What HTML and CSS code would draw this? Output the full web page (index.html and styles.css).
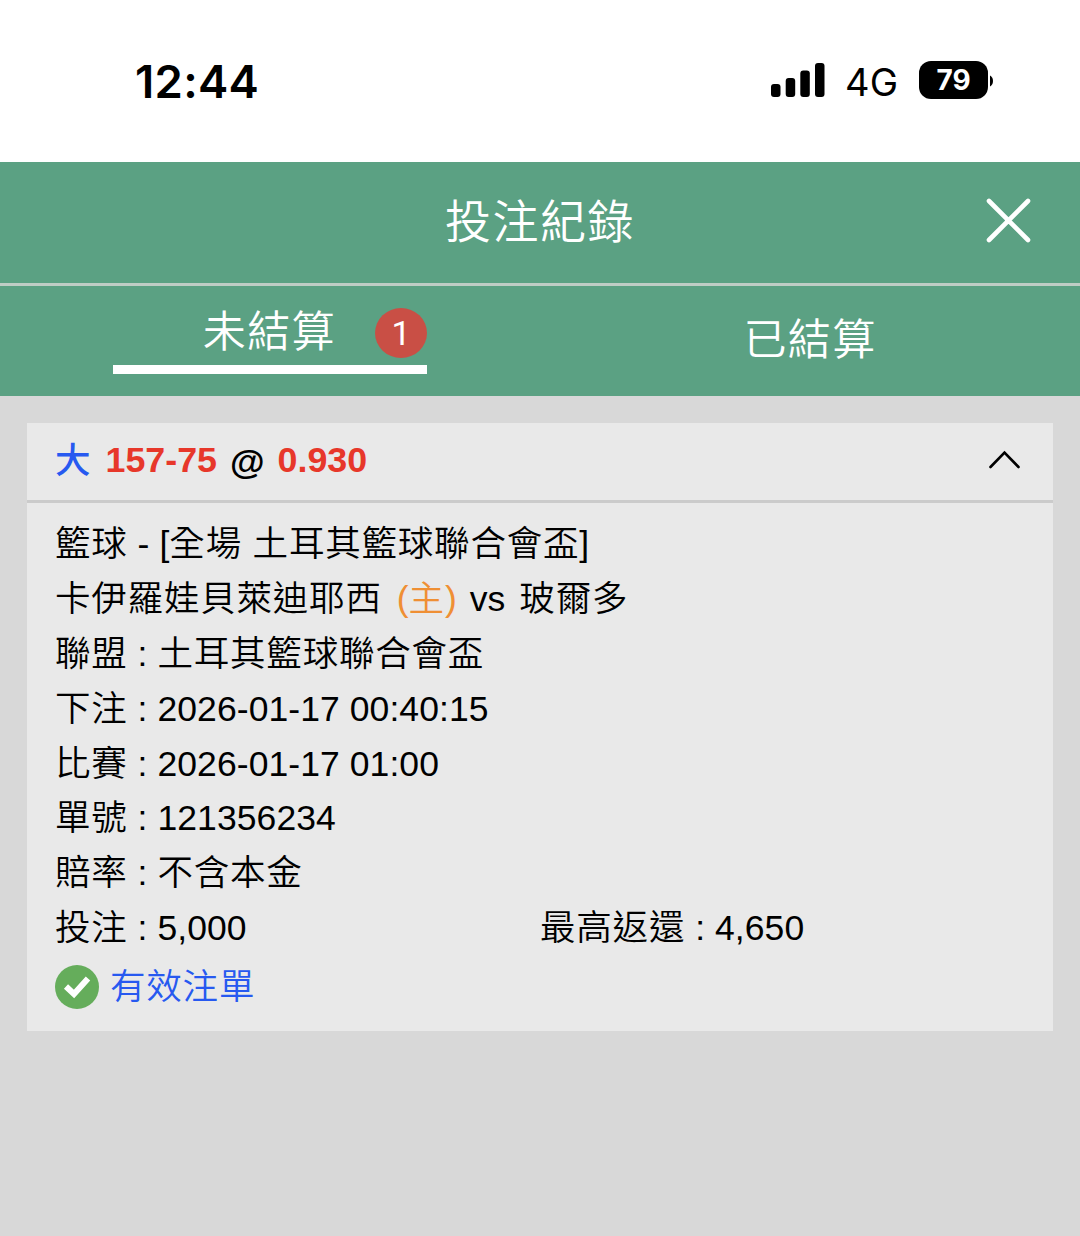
FILE: index.html
```html
<!DOCTYPE html>
<html lang="zh-Hant">
<head>
    <meta charset="UTF-8">
    <meta name="viewport" content="width=device-width, initial-scale=1.0">
    <title>投注紀錄</title>
    <link rel="stylesheet" href="styles.css">
</head>
<body>
    <div class="status-bar">
        <div class="clock">12:44</div>
        <div class="status-right">
            <svg class="signal" width="54" height="35" viewBox="0 0 54 35">
                <rect x="0" y="21" width="9.5" height="13" rx="3"/>
                <rect x="14.7" y="15" width="9.5" height="19" rx="3"/>
                <rect x="29.3" y="7.5" width="9.5" height="26.5" rx="3"/>
                <rect x="44" y="0" width="9.5" height="34" rx="3"/>
            </svg>
            <span class="network">4G</span>
            <span class="battery">79</span>
            <svg class="battery-tip" width="5" height="12" viewBox="0 0 5 12">
                <path d="M0 0.5C4 2.5 4 9.5 0 11.5z"/>
            </svg>
        </div>
    </div>

    <header class="header">
        <h1>投注紀錄</h1>
        <svg class="close" width="46" height="46" viewBox="0 0 46 46">
            <path d="M3 3l39 39M42 3L3 42"/>
        </svg>
    </header>

    <nav class="tabs">
        <div class="tab">
            <div class="tab-inner active">
                <span class="tab-label">未結算</span>
                <span class="badge">1</span>
            </div>
        </div>
        <div class="tab">
            <span class="tab-label">已結算</span>
        </div>
    </nav>

    <main class="content">
        <section class="card">
            <div class="card-head">
                <div class="pick">
                    <span class="pick-side">大</span>
                    <span class="red">157-75</span>
                    <span class="at">@</span>
                    <span class="red">0.930</span>
                </div>
                <svg class="arrow" width="32" height="20" viewBox="0 0 32 20">
                    <path d="M2.5 17L16.5 2.5l14 14.5"/>
                </svg>
            </div>
            <div class="card-body">
                <div class="row"><span class="zh">籃球</span> - [<span class="zh">全場 土耳其籃球聯合會盃</span>]</div>
                <div class="row"><span class="zh">卡伊羅娃貝萊迪耶西</span> <span class="home">(<span class="zh">主</span>)</span> vs <span class="zh away">玻爾多</span></div>
                <div class="row"><span class="zh">聯盟</span> : <span class="zh">土耳其籃球聯合會盃</span></div>
                <div class="row"><span class="zh">下注</span> : 2026-01-17 00:40:15</div>
                <div class="row"><span class="zh">比賽</span> : 2026-01-17 01:00</div>
                <div class="row"><span class="zh">單號</span> : 121356234</div>
                <div class="row"><span class="zh">賠率</span> : <span class="zh">不含本金</span></div>
                <div class="row amounts">
                    <div><span class="zh">投注</span> : 5,000</div>
                    <div><span class="zh">最高返還</span> : 4,650</div>
                </div>
                <div class="valid">
                    <svg width="44" height="44" viewBox="0 0 44 44">
                        <circle cx="22" cy="22" r="22"/>
                        <path d="M11 21.5l8 7.5L33 13.5"/>
                    </svg>
                    <span class="zh">有效注單</span>
                </div>
            </div>
        </section>
    </main>
</body>
</html>
```

FILE: styles.css
```css
* {
    box-sizing: border-box;
}
body {
    margin: 0;
    min-height: 1236px;
    background-color: #d8d8d8;
    color: #000;
    font-family: "Liberation Sans", "Noto Sans CJK TC", sans-serif;
    font-size: 35.5px;
}
svg {
    display: block;
    flex: none;
}
.status-bar {
    display: flex;
    justify-content: space-between;
    align-items: center;
    height: 162px;
    padding: 0 85px 0 135px;
    background-color: #fff;
    font-family: Inter, sans-serif;
}
.clock {
    font-size: 45.5px;
    font-weight: 600;
    letter-spacing: 0.3px;
}
.status-right {
    display: flex;
    align-items: center;
}
.signal {
    margin-bottom: 1px;
}
.network {
    margin: 2px 21px 0 20px;
    font-size: 38px;
}
.battery {
    width: 69px;
    height: 38px;
    margin-bottom: 2px;
    border-radius: 12px;
    background-color: #000;
    color: #fff;
    font-size: 28px;
    font-weight: 700;
    line-height: 38px;
    text-align: center;
}
.battery-tip {
    margin-left: 2px;
}
.header {
    display: grid;
    grid-template-columns: 1fr auto 1fr;
    align-items: center;
    height: 124px;
    padding: 0 48px 4px;
    border-bottom: 3px solid #bfcdc5;
    background-color: #5ba183;
    color: #fff;
}
.header h1 {
    grid-column: 2;
    margin: 2px 0 0;
    font-size: 46px;
    font-weight: 350;
    letter-spacing: 1.5px;
    line-height: 60px;
}
.close {
    justify-self: end;
    fill: none;
    stroke: #fff;
    stroke-width: 4.6;
    stroke-linecap: round;
}
.tabs {
    display: flex;
    height: 110px;
    background-color: #5ba183;
    color: #fff;
}
.tab {
    display: flex;
    flex: 1;
    align-items: center;
    justify-content: center;
}
.tab-label {
    margin-bottom: 2px;
    font-size: 43px;
    font-weight: 350;
    letter-spacing: 1.4px;
    line-height: 60px;
}
.tab-inner {
    display: flex;
    align-items: center;
    justify-content: flex-end;
    width: 314px;
    height: 74px;
    margin-bottom: 8px;
    border-bottom: 9px solid #fff;
}
.badge {
    width: 52px;
    height: 50px;
    margin-left: 39px;
    border-radius: 50%;
    background-color: #c94f45;
    font-family: Roboto, sans-serif;
    font-size: 34px;
    line-height: 50px;
    text-align: center;
}
.content {
    padding: 27px 27px 0;
}
.card {
    background-color: #e9e9e9;
}
.card-head {
    display: flex;
    align-items: center;
    justify-content: space-between;
    height: 80px;
    padding: 0 33px 3px 28px;
    border-bottom: 3px solid #cbcbcb;
}
.pick {
    display: flex;
    align-items: center;
    font-weight: 700;
    line-height: 50px;
}
.pick-side {
    margin: 2px 15px 0 0;
    color: #2759f0;
    font-weight: 500;
}
.red {
    color: #e7372a;
    font-size: 35.8px;
}
.at {
    margin: 3px 13px 0 13px;
}
.arrow {
    fill: none;
    stroke: #000;
    stroke-width: 2.6;
    stroke-linecap: round;
}
.card-body {
    height: 528px;
    padding: 14px 28px 0;
}
.row {
    height: 54.9px;
    line-height: 54.9px;
    letter-spacing: 0.08px;
    white-space: nowrap;
}
.zh {
    font-weight: 350;
    letter-spacing: 0.8px;
}
.home {
    margin: 0 3px 0 5px;
    color: #ef8f34;
}
.away {
    margin-left: 4px;
}
.amounts {
    display: grid;
    grid-template-columns: 1fr 1fr;
}
.valid {
    display: flex;
    align-items: center;
    height: 62px;
    color: #2759f0;
}
.valid .zh {
    margin: 0 0 8px 11px;
}
.valid circle {
    fill: #65ad5b;
}
.valid path {
    fill: none;
    stroke: #fff;
    stroke-width: 6;
}
```
